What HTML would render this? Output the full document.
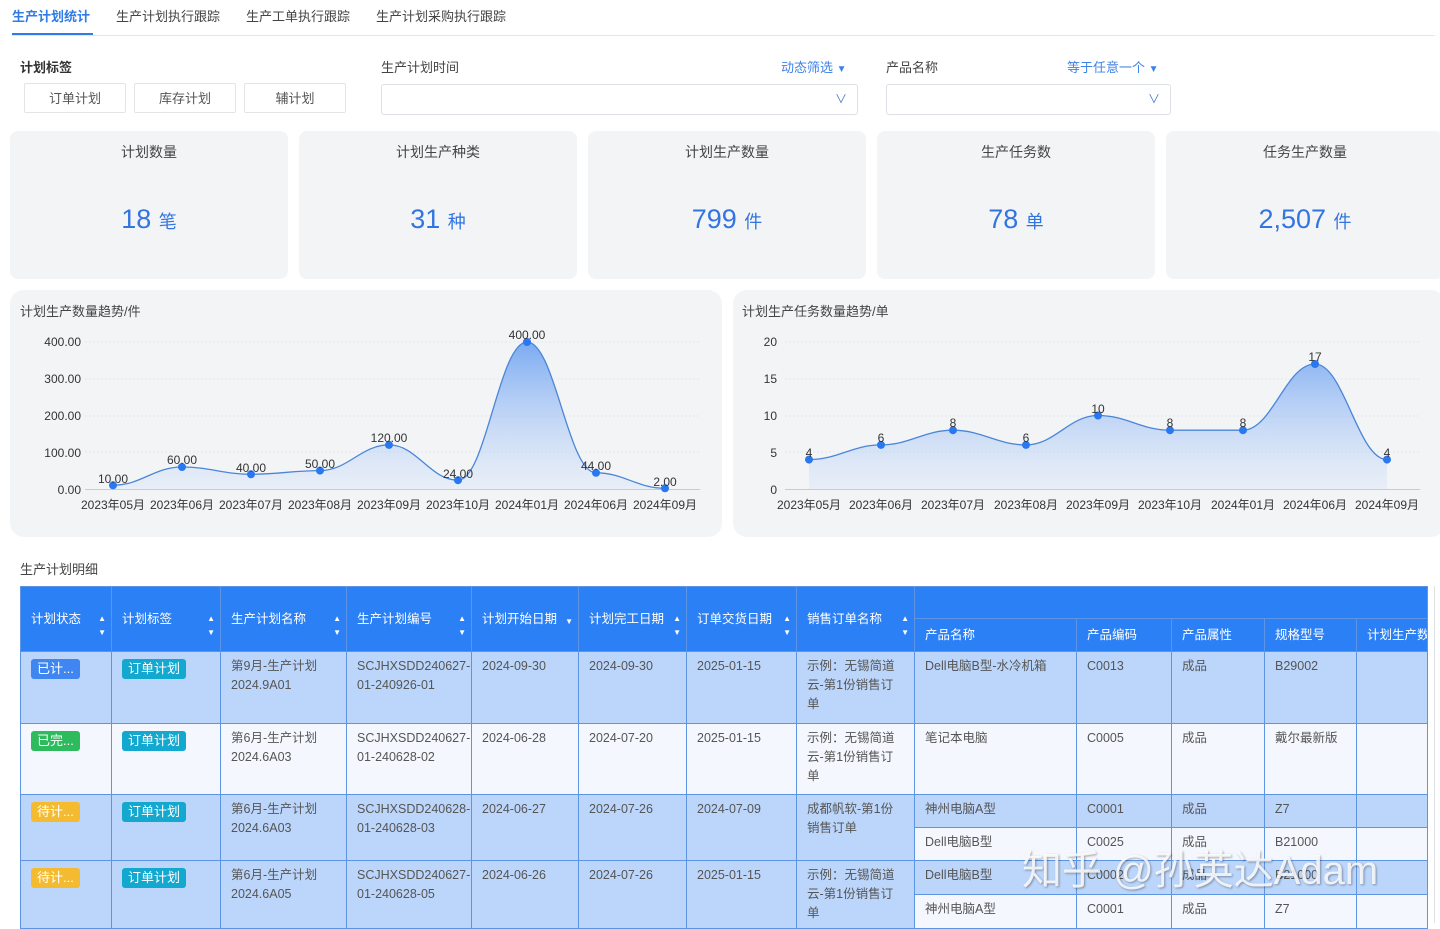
<!DOCTYPE html>
<html><head><meta charset="utf-8"><style>
*{margin:0;padding:0;box-sizing:border-box}
body{width:1440px;height:923px;overflow:hidden;background:#fff;font-family:"Liberation Sans","Noto Sans CJK SC",sans-serif;color:#333;position:relative;font-size:13px}
.a{position:absolute}
.tab{top:6px;font-size:13px;color:#444}
.btn{top:83px;width:102px;height:30px;border:1px solid #e2e4e8;border-radius:2px;text-align:center;line-height:29px;font-size:13px;color:#555;background:#fff}
.sel{top:84px;height:31px;border:1px solid #dde0e5;border-radius:3px;background:#fff}
.card{top:131px;width:278px;height:148px;background:#f3f4f6;border-radius:8px;text-align:center}
.card .t{margin-top:11px;font-size:14px;color:#444}
.card .v{margin-top:42px;font-size:27px;color:#3375e0}
.card .v span{font-size:18px}
.panel{top:290px;height:247px;background:#f3f4f6;border-radius:14px}
table{border-collapse:collapse;table-layout:fixed;position:absolute;left:20px;top:586px;width:1407px}
td,th{border:1px solid #5d95e4;font-size:12.5px;vertical-align:top;text-align:left;padding:5px 10px 0;color:#555;line-height:19px;font-weight:normal;overflow:hidden}
th{background:#2c80f6;color:#fff;vertical-align:middle;padding:0 10px;white-space:nowrap;position:relative;font-size:12.5px}
.b td{background:#bcd6fb}.w td{background:#f4f8fe}
td.b{background:#bcd6fb}td.w{background:#f4f8fe}
.tg{display:inline-block;color:#fff;border-radius:3px;padding:0 6px;font-size:13px;line-height:20px;margin-top:2px}
.ar{position:absolute;right:5px;top:50%;margin-top:-7px;font-size:8px;line-height:14px}
</style></head><body>
<div class="a tab" style="left:12px;color:#2f7be8;font-weight:bold">生产计划统计</div>
<div class="a" style="left:12px;top:33px;width:81px;height:2px;background:#2f7be8"></div>
<div class="a tab" style="left:116px">生产计划执行跟踪</div>
<div class="a tab" style="left:246px">生产工单执行跟踪</div>
<div class="a tab" style="left:376px">生产计划采购执行跟踪</div>
<div class="a" style="left:12px;top:35px;width:1423px;height:1px;background:#e4e6ea"></div>

<div class="a" style="left:20px;top:57px;font-size:13px;font-weight:bold;color:#333">计划标签</div>
<div class="a btn" style="left:24px">订单计划</div>
<div class="a btn" style="left:134px">库存计划</div>
<div class="a btn" style="left:244px">辅计划</div>
<div class="a" style="left:381px;top:57px;color:#444">生产计划时间</div>
<div class="a" style="left:781px;top:57px;color:#3f83e6">动态筛选 <span style="font-size:10px">▼</span></div>
<div class="a sel" style="left:381px;width:477px"><span class="a" style="right:10px;top:5px;color:#4a7fd0;font-size:12px">&#x2228;</span></div>
<div class="a" style="left:886px;top:57px;color:#444">产品名称</div>
<div class="a" style="left:1067px;top:57px;color:#3f83e6">等于任意一个 <span style="font-size:10px">▼</span></div>
<div class="a sel" style="left:886px;width:285px"><span class="a" style="right:10px;top:5px;color:#4a7fd0;font-size:12px">&#x2228;</span></div>

<div class="a card" style="left:10px"><div class="t">计划数量</div><div class="v">18 <span>笔</span></div></div>
<div class="a card" style="left:299px"><div class="t">计划生产种类</div><div class="v">31 <span>种</span></div></div>
<div class="a card" style="left:588px"><div class="t">计划生产数量</div><div class="v">799 <span>件</span></div></div>
<div class="a card" style="left:877px"><div class="t">生产任务数</div><div class="v">78 <span>单</span></div></div>
<div class="a card" style="left:1166px"><div class="t">任务生产数量</div><div class="v">2,507 <span>件</span></div></div>

<div class="a panel" style="left:10px;width:712px"></div>
<div class="a panel" style="left:733px;width:712px"></div>
<div class="a" style="left:20px;top:301px;color:#444">计划生产数量趋势/件</div>
<div class="a" style="left:742px;top:301px;color:#444">计划生产任务数量趋势/单</div>
<svg class="a" style="left:0;top:0" width="1440" height="545" font-family="Liberation Sans, Noto Sans CJK SC, sans-serif" font-size="12" fill="#333">
<defs><linearGradient id="g2" x1="0" y1="340" x2="0" y2="489" gradientUnits="userSpaceOnUse"><stop offset="0" stop-color="#4f8ff0" stop-opacity=".75"/><stop offset="1" stop-color="#cfe0fa" stop-opacity=".3"/></linearGradient></defs>
<g stroke="#e3e6ea" stroke-dasharray="2,2"><line x1="85" x2="700" y1="342" y2="342"/><line x1="85" x2="700" y1="379" y2="379"/><line x1="85" x2="700" y1="416" y2="416"/><line x1="85" x2="700" y1="452" y2="452"/>
<line x1="785" x2="1420" y1="342" y2="342"/><line x1="785" x2="1420" y1="379" y2="379"/><line x1="785" x2="1420" y1="416" y2="416"/><line x1="785" x2="1420" y1="452" y2="452"/></g>
<line x1="85" x2="700" y1="489.5" y2="489.5" stroke="#c8ccd2"/><line x1="785" x2="1420" y1="489.5" y2="489.5" stroke="#c8ccd2"/>
<g text-anchor="end"><text x="81" y="346">400.00</text><text x="81" y="383">300.00</text><text x="81" y="420">200.00</text><text x="81" y="457">100.00</text><text x="81" y="494">0.00</text>
<text x="777" y="346">20</text><text x="777" y="383">15</text><text x="777" y="420">10</text><text x="777" y="457">5</text><text x="777" y="494">0</text></g>
<path fill="url(#g2)" d="M113,485.3 C141,485.3 154,467 182,467 C210,467 223,474.3 251,474.3 C279,474.3 292,470.6 320,470.6 C348,470.6 361,444.9 389,444.9 C417,444.9 430,480.2 458,480.2 C486,480.2 499,342 527,342 C555,342 568,472.8 596,472.8 C624,472.8 637,488.3 665,488.3 L665,489 L113,489Z"/>
<path fill="none" stroke="#4a86d8" stroke-width="1.3" d="M113,485.3 C141,485.3 154,467 182,467 C210,467 223,474.3 251,474.3 C279,474.3 292,470.6 320,470.6 C348,470.6 361,444.9 389,444.9 C417,444.9 430,480.2 458,480.2 C486,480.2 499,342 527,342 C555,342 568,472.8 596,472.8 C624,472.8 637,488.3 665,488.3"/>
<path fill="url(#g2)" d="M809,459.6 C838,459.6 852,444.9 881,444.9 C910,444.9 924,430.2 953,430.2 C982,430.2 997,444.9 1026,444.9 C1055,444.9 1069,415.5 1098,415.5 C1127,415.5 1141,430.2 1170,430.2 C1199,430.2 1214,430.2 1243,430.2 C1272,430.2 1286,364 1315,364 C1344,364 1358,459.6 1387,459.6 L1387,489 L809,489Z"/>
<path fill="none" stroke="#4a86d8" stroke-width="1.3" d="M809,459.6 C838,459.6 852,444.9 881,444.9 C910,444.9 924,430.2 953,430.2 C982,430.2 997,444.9 1026,444.9 C1055,444.9 1069,415.5 1098,415.5 C1127,415.5 1141,430.2 1170,430.2 C1199,430.2 1214,430.2 1243,430.2 C1272,430.2 1286,364 1315,364 C1344,364 1358,459.6 1387,459.6"/>
<g fill="#2a78ef"><circle cx="113" cy="485.3" r="4"/><circle cx="182" cy="467" r="4"/><circle cx="251" cy="474.3" r="4"/><circle cx="320" cy="470.6" r="4"/><circle cx="389" cy="444.9" r="4"/><circle cx="458" cy="480.2" r="4"/><circle cx="527" cy="342" r="4"/><circle cx="596" cy="472.8" r="4"/><circle cx="665" cy="488.3" r="4"/>
<circle cx="809" cy="459.6" r="4"/><circle cx="881" cy="444.9" r="4"/><circle cx="953" cy="430.2" r="4"/><circle cx="1026" cy="444.9" r="4"/><circle cx="1098" cy="415.5" r="4"/><circle cx="1170" cy="430.2" r="4"/><circle cx="1243" cy="430.2" r="4"/><circle cx="1315" cy="364" r="4"/><circle cx="1387" cy="459.6" r="4"/></g>
<g text-anchor="middle"><text x="113" y="483">10.00</text><text x="182" y="464">60.00</text><text x="251" y="472">40.00</text><text x="320" y="468">50.00</text><text x="389" y="442">120.00</text><text x="458" y="478">24.00</text><text x="527" y="339">400.00</text><text x="596" y="470">44.00</text><text x="665" y="486">2.00</text>
<text x="809" y="457">4</text><text x="881" y="442">6</text><text x="953" y="427">8</text><text x="1026" y="442">6</text><text x="1098" y="413">10</text><text x="1170" y="427">8</text><text x="1243" y="427">8</text><text x="1315" y="361">17</text><text x="1387" y="457">4</text>
<text x="113" y="509">2023年05月</text><text x="182" y="509">2023年06月</text><text x="251" y="509">2023年07月</text><text x="320" y="509">2023年08月</text><text x="389" y="509">2023年09月</text><text x="458" y="509">2023年10月</text><text x="527" y="509">2024年01月</text><text x="596" y="509">2024年06月</text><text x="665" y="509">2024年09月</text>
<text x="809" y="509">2023年05月</text><text x="881" y="509">2023年06月</text><text x="953" y="509">2023年07月</text><text x="1026" y="509">2023年08月</text><text x="1098" y="509">2023年09月</text><text x="1170" y="509">2023年10月</text><text x="1243" y="509">2024年01月</text><text x="1315" y="509">2024年06月</text><text x="1387" y="509">2024年09月</text></g>
</svg>

<div class="a" style="left:20px;top:559px;color:#444">生产计划明细</div>
<div class="a" style="left:1434px;top:586px;width:1px;height:337px;background:#dde0e5"></div>
<table>
<colgroup><col style="width:91px"><col style="width:109px"><col style="width:126px"><col style="width:125px"><col style="width:107px"><col style="width:108px"><col style="width:110px"><col style="width:118px"><col style="width:162px"><col style="width:95px"><col style="width:93px"><col style="width:92px"><col style="width:71px"></colgroup>
<tr style="height:32px"><th rowspan="2">计划状态<span class="ar">▲<br>▼</span></th><th rowspan="2">计划标签<span class="ar">▲<br>▼</span></th><th rowspan="2">生产计划名称<span class="ar">▲<br>▼</span></th><th rowspan="2">生产计划编号<span class="ar">▲<br>▼</span></th><th rowspan="2">计划开始日期<span class="ar" style="margin-top:-4px">▼</span></th><th rowspan="2">计划完工日期<span class="ar">▲<br>▼</span></th><th rowspan="2">订单交货日期<span class="ar">▲<br>▼</span></th><th rowspan="2">销售订单名称<span class="ar">▲<br>▼</span></th><th colspan="5" style="border-bottom:1px solid #5d95e4"></th></tr>
<tr style="height:33px"><th>产品名称</th><th>产品编码</th><th>产品属性</th><th>规格型号</th><th>计划生产数</th></tr>
<tr class="b" style="height:72px"><td><span class="tg" style="background:#3f86f0">已计...</span></td><td><span class="tg" style="background:#12a8d0">订单计划</span></td><td>第9月-生产计划<br>2024.9A01</td><td>SCJHXSDD240627-<br>01-240926-01</td><td>2024-09-30</td><td>2024-09-30</td><td>2025-01-15</td><td>示例：无锡简道<br>云-第1份销售订<br>单</td><td>Dell电脑B型-水冷机箱</td><td>C0013</td><td>成品</td><td>B29002</td><td></td></tr>
<tr class="w" style="height:71px"><td><span class="tg" style="background:#2dbb5d">已完...</span></td><td><span class="tg" style="background:#12a8d0">订单计划</span></td><td>第6月-生产计划<br>2024.6A03</td><td>SCJHXSDD240627-<br>01-240628-02</td><td>2024-06-28</td><td>2024-07-20</td><td>2025-01-15</td><td>示例：无锡简道<br>云-第1份销售订<br>单</td><td>笔记本电脑</td><td>C0005</td><td>成品</td><td>戴尔最新版</td><td></td></tr>
<tr class="b" style="height:33px"><td rowspan="2" class="b"><span class="tg" style="background:#f4bb30">待计...</span></td><td rowspan="2" class="b"><span class="tg" style="background:#12a8d0">订单计划</span></td><td rowspan="2" class="b">第6月-生产计划<br>2024.6A03</td><td rowspan="2" class="b">SCJHXSDD240628-<br>01-240628-03</td><td rowspan="2" class="b">2024-06-27</td><td rowspan="2" class="b">2024-07-26</td><td rowspan="2" class="b">2024-07-09</td><td rowspan="2" class="b">成都帆软-第1份<br>销售订单</td><td>神州电脑A型</td><td>C0001</td><td>成品</td><td>Z7</td><td></td></tr>
<tr class="w" style="height:33px"><td>Dell电脑B型</td><td>C0025</td><td>成品</td><td>B21000</td><td></td></tr>
<tr class="b" style="height:34px"><td rowspan="2" class="b"><span class="tg" style="background:#f4bb30">待计...</span></td><td rowspan="2" class="b"><span class="tg" style="background:#12a8d0">订单计划</span></td><td rowspan="2" class="b">第6月-生产计划<br>2024.6A05</td><td rowspan="2" class="b">SCJHXSDD240627-<br>01-240628-05</td><td rowspan="2" class="b">2024-06-26</td><td rowspan="2" class="b">2024-07-26</td><td rowspan="2" class="b">2025-01-15</td><td rowspan="2" class="b">示例：无锡简道<br>云-第1份销售订<br>单</td><td>Dell电脑B型</td><td>C0002</td><td>成品</td><td>B21000</td><td></td></tr>
<tr class="w" style="height:34px"><td>神州电脑A型</td><td>C0001</td><td>成品</td><td>Z7</td><td></td></tr>
</table>
<div class="a" style="left:1022px;top:838px;font-size:40px;color:rgba(255,255,255,.85);text-shadow:1px 1px 2px rgba(0,0,0,.35);white-space:nowrap">知乎 @孙英达Adam</div>
</body></html>
